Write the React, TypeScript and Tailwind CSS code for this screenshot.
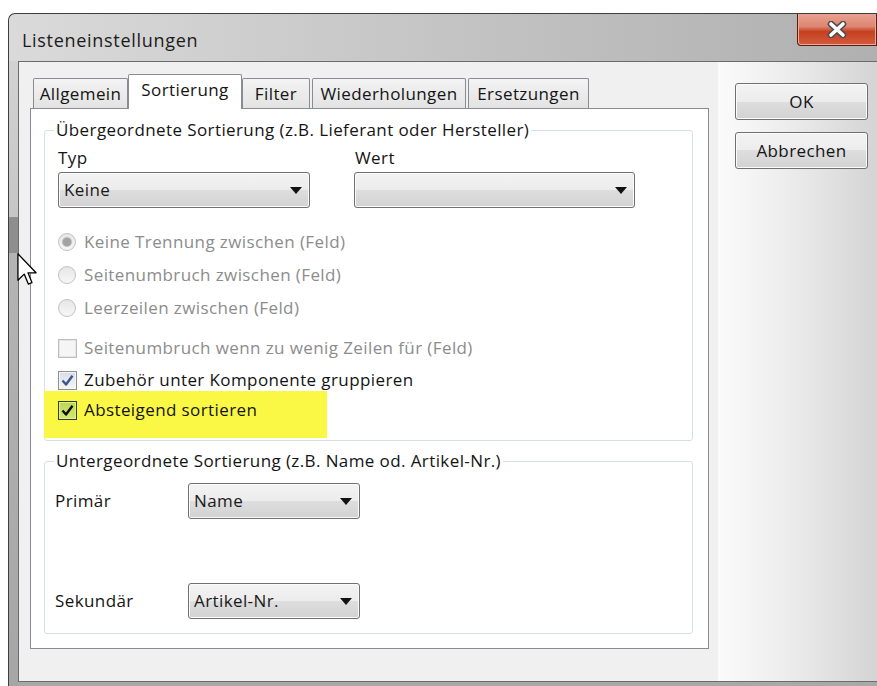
import React from "react";

const FONT = "font-['Open_Sans','Noto_Sans',sans-serif]";

function Arrow() {
  return (
    <svg width="12" height="7" viewBox="0 0 12 7">
      <path d="M0 0h12L6 7z" fill="#121212" />
    </svg>
  );
}

function Combo({ value, className }: { value?: string; className: string }) {
  return (
    <div
      className={`flex items-center justify-between rounded-[3px] border border-[#707070] bg-[linear-gradient(#f3f3f3_0%,#ececec_50%,#dedede_50%,#d2d2d2_100%)] pl-[5px] pr-[7px] shadow-[inset_0_0_0_1px_#fbfbfb] ${className}`}
    >
      <span className="text-[#1a1a1a]">{value}</span>
      <Arrow />
    </div>
  );
}

function Radio({ selected, label }: { selected?: boolean; label: string }) {
  return (
    <div className="flex h-[22px] items-center">
      <div className="flex h-[18px] w-[18px] items-center justify-center rounded-full border border-[#c2c2c2] bg-[linear-gradient(#e6e6e6,#f7f7f7)]">
        {selected && (
          <div className="h-[8px] w-[8px] rounded-full bg-[#a3a3a3] shadow-[0_0_0_1px_#bdbdbd]" />
        )}
      </div>
      <span className="ml-[8px] text-[#8c8c8c]">{label}</span>
    </div>
  );
}

function Box({ state }: { state: "disabled" | "checked" | "hot" }) {
  if (state === "disabled") {
    return (
      <div className="h-[19px] w-[19px] border border-[#bdbdbd] bg-[#f5f5f5] shadow-[inset_0_0_0_1px_#e6e6e6]" />
    );
  }
  const box =
    state === "hot"
      ? "border-[#33401f] bg-[linear-gradient(#bcd65a,#d4e86c)] shadow-[inset_0_0_0_1px_#dff089]"
      : "border-[#8e8f8f] bg-[linear-gradient(#d8dde4,#f6f7f8)] shadow-[inset_0_0_0_1px_#f4f4f4]";
  const tick = state === "hot" ? "#0c0c0c" : "#3a5592";
  return (
    <div className={`flex h-[19px] w-[19px] items-center justify-center border ${box}`}>
      <svg width="13" height="13" viewBox="0 0 13 13">
        <path d="M1.5 6.5 L5 10.5 L11.5 1.8" stroke={tick} strokeWidth="2.4" fill="none" strokeLinejoin="round" />
      </svg>
    </div>
  );
}

function CheckRow({ state, label }: { state: "disabled" | "checked" | "hot"; label: string }) {
  return (
    <div className="flex h-[22px] items-center">
      <Box state={state} />
      <span className={`ml-[7px] ${state === "disabled" ? "text-[#8c8c8c]" : "text-[#141414]"}`}>{label}</span>
    </div>
  );
}

function Tab({ label, width, active }: { label: string; width: string; active?: boolean }) {
  if (active) {
    return (
      <div
        className={`relative z-10 -mb-px flex h-[35px] items-start justify-center rounded-t-[2px] border border-b-0 border-[#898c95] bg-white pt-[4px] ${width}`}
      >
        {label}
      </div>
    );
  }
  return (
    <div
      className={`flex h-[30px] items-center justify-center rounded-t-[2px] border border-b-0 border-[#898c95] bg-[linear-gradient(#f3f3f3,#e3e3e3)] ${width}`}
    >
      {label}
    </div>
  );
}

function Button({ label }: { label: string }) {
  return (
    <div className="flex h-[37px] w-[133px] items-center justify-center rounded-[3px] border border-[#707070] bg-[linear-gradient(#f3f3f3_0%,#ececec_50%,#dedede_50%,#d2d2d2_100%)] text-[#141414] shadow-[inset_0_0_0_1px_#fbfbfb]">
      {label}
    </div>
  );
}

export default function App() {
  return (
    <div className={`relative h-[686px] w-[877px] overflow-hidden bg-white text-[17px] leading-[22px] tracking-[0.4px] text-[#141414] ${FONT}`}>
      <div className="ml-[8px] mt-[13px] h-[673px] w-[869px] overflow-hidden rounded-tl-[7px] border-l border-t border-[#3e3e3e] bg-[linear-gradient(90deg,#dadada,#c2c2c2_55%,#b0b0b0)]">
        {/* title bar */}
        <div className="relative h-[47px]">
          <div className="pl-[13px] pt-[14px] text-[18px] leading-[24px] tracking-[0.7px] text-[#1b1b1b]">Listeneinstellungen</div>
          <div className="absolute right-0 top-[-1px] flex h-[33px] w-[80px] items-center justify-center rounded-bl-[4px] border border-t-0 border-[#5b1d12] bg-[linear-gradient(#e9a493_0%,#dd8672_42%,#c5401f_58%,#d35b3e_100%)] shadow-[inset_0_0_0_1px_#eeaa98]">
            <svg width="20" height="17" viewBox="0 0 20 17">
              <path d="M4 3 L16 14 M16 3 L4 14" stroke="#4d4d4d" strokeWidth="6.5" strokeLinecap="round" />
              <path d="M4 3 L16 14 M16 3 L4 14" stroke="#ffffff" strokeWidth="3.6" strokeLinecap="round" />
            </svg>
          </div>
        </div>

        {/* frame + client */}
        <div className="flex h-[625px]">
          <div className="flex w-[9px] flex-col">
            <div className="h-[156px] bg-[linear-gradient(#d2d2d2,#c6c6c6)]" />
            <div className="h-[36px] bg-[#8e8e8e]" />
            <div className="flex-1 bg-[linear-gradient(#b4b4b4,#a6a6a6)]" />
          </div>
          <div className="flex flex-1 flex-col">
            <div className="flex h-[621px] border-b border-l border-t border-[#6b6b6b]">
              {/* tab area */}
              <div className="h-full w-[699px] bg-[#f0f0f0] pl-[11px] pt-[12px]">
                <div className="ml-[3px] flex items-end">
                  <Tab label="Allgemein" width="w-[95px]" />
                  <Tab label="Sortierung" width="w-[114px]" active />
                  <Tab label="Filter" width="w-[68px]" />
                  <Tab label="Wiederholungen" width="w-[154px] ml-[2px]" />
                  <Tab label="Ersetzungen" width="w-[121px] ml-[2px]" />
                </div>
                <div className="h-[541px] w-[679px] border border-[#898c95] bg-white pl-[13px] pt-[10px]">
                  <fieldset className="w-[649px] rounded-[3px] border border-[#d5dfe5] p-0">
                    <legend className="ml-[9px] px-[2px] leading-[22px]">
                      Übergeordnete Sortierung (z.B. Lieferant oder Hersteller)
                    </legend>
                    <div className="pb-[2px]">
                      <div className="mt-[6px] flex pl-[13px]">
                        <div className="w-[297px]">Typ</div>
                        <div>Wert</div>
                      </div>
                      <div className="mt-[3px] flex pl-[13px]">
                        <Combo value="Keine" className="h-[36px] w-[252px]" />
                        <Combo className="ml-[44px] h-[36px] w-[281px]" />
                      </div>
                      <div className="mt-[23px] flex flex-col gap-[11px] pl-[13px]">
                        <Radio selected label="Keine Trennung zwischen (Feld)" />
                        <Radio label="Seitenumbruch zwischen (Feld)" />
                        <Radio label="Leerzeilen zwischen (Feld)" />
                      </div>
                      <div className="mt-[18px] flex flex-col gap-[10px] pl-[13px]">
                        <CheckRow state="disabled" label="Seitenumbruch wenn zu wenig Zeilen für (Feld)" />
                        <CheckRow state="checked" label="Zubehör unter Komponente gruppieren" />
                      </div>
                      <div className="-ml-px h-[47px] w-[283px] bg-[#fbf845] pl-[14px] pt-[8px]">
                        <CheckRow state="hot" label="Absteigend sortieren" />
                      </div>
                    </div>
                  </fieldset>

                  <fieldset className="mt-[9px] w-[649px] rounded-[3px] border border-[#d5dfe5] p-0">
                    <legend className="ml-[9px] px-[2px] leading-[22px]">
                      Untergeordnete Sortierung (z.B. Name od. Artikel-Nr.)
                    </legend>
                    <div className="pb-[14px] pl-[10px]">
                      <div className="mt-[11px] flex items-center">
                        <div className="w-[133px]">Primär</div>
                        <Combo value="Name" className="h-[36px] w-[172px]" />
                      </div>
                      <div className="mt-[64px] flex items-center">
                        <div className="w-[133px]">Sekundär</div>
                        <Combo value="Artikel-Nr." className="h-[36px] w-[172px]" />
                      </div>
                    </div>
                  </fieldset>
                </div>
              </div>
              {/* command buttons */}
              <div className="flex h-full flex-1 flex-col gap-[12px] bg-[linear-gradient(90deg,#fbfbfb,#ececec_45%,#d4d4d4)] pl-[17px] pt-[21px]">
                <Button label="OK" />
                <Button label="Abbrechen" />
              </div>
            </div>
            <div className="flex-1 bg-[#a9a9a9]" />
          </div>
        </div>
      </div>

      {/* mouse pointer */}
      <svg className="absolute left-[17px] top-[253px]" width="20" height="33" viewBox="0 0 12 20">
        <path d="M0.5 0.5 L0.5 16.5 L4.3 12.8 L6.8 18.8 L9 17.9 L6.6 12 L11.5 12 Z" fill="#ffffff" stroke="#000000" strokeWidth="0.8" strokeLinejoin="round" />
      </svg>
    </div>
  );
}
